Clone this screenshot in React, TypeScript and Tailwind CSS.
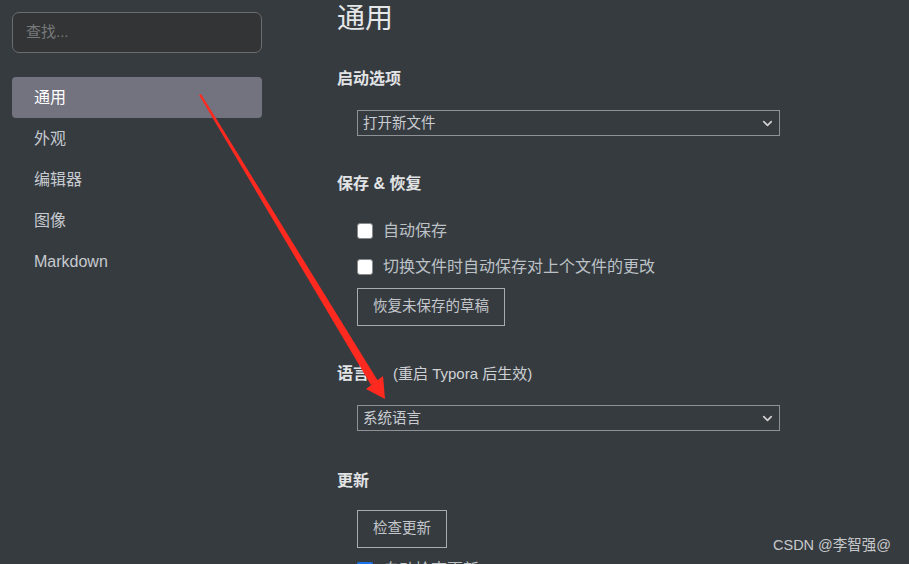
import { ChevronDown, Check } from 'lucide-react';

const font = { fontFamily: '"Liberation Sans", "Noto Sans CJK SC", sans-serif' };

const navItems = ['通用', '外观', '编辑器', '图像', 'Markdown'];

const Select = ({ value }: { value: string }) => (
  <div className="ml-5 flex h-[26px] w-[423px] items-center justify-between border border-[#8e9297] pl-[5px] pr-[4px] text-[14.5px] text-[#c9ccd0]">
    <span className="leading-none">{value}</span>
    <ChevronDown className="h-[15px] w-[15px] text-[#d0d0d0]" strokeWidth={2.75} />
  </div>
);

const Checkbox = ({ label, checked = false }: { label: string; checked?: boolean }) => (
  <label className="ml-5 flex h-6 items-center gap-[10px] text-[16px] text-[#bcc1c6]">
    <span
      className={
        checked
          ? 'flex h-[16px] w-[16px] items-center justify-center rounded-[2px] bg-[#1a73e8]'
          : 'h-[16px] w-[16px] rounded-[3px] border border-[#8a8a8a] bg-white'
      }
    >
      {checked && <Check className="h-3 w-3 text-white" strokeWidth={4} />}
    </span>
    {label}
  </label>
);

const Button = ({ children }: { children: string }) => (
  <button className="ml-5 h-[38px] w-fit border border-[#a9abad] px-[15px] text-[14.5px] text-[#c3c6ca]">
    {children}
  </button>
);

const Heading = ({ children }: { children: React.ReactNode }) => (
  <h3 className="h-6 text-[16px] font-bold leading-6 text-[#e1e3e5]">{children}</h3>
);

export default function App() {
  return (
    <div className="relative flex h-[564px] w-[909px] overflow-hidden bg-[#363b40]" style={font}>
      <aside className="flex w-[274px] shrink-0 flex-col p-3">
        <div className="flex h-[41px] items-center rounded-[7px] border border-[#6b6c6e] bg-[#333435] px-[13px] text-[15px] text-[#77797b]">
          查找...
        </div>
        <nav className="mt-6 flex flex-col">
          {navItems.map((name, i) => (
            <div
              key={name}
              className={
                i === 0
                  ? 'flex h-[41px] items-center rounded-[4px] bg-[#737380] px-[22px] text-[16px] text-white'
                  : 'flex h-[41px] items-center px-[22px] text-[16px] text-[#c6cacf]'
              }
            >
              {name}
            </div>
          ))}
        </nav>
      </aside>

      <main className="flex flex-1 flex-col pl-[63px]">
        <h1 className="h-9 text-[28px] leading-[38px] text-[#e4e6e8]">通用</h1>

        <div className="mt-[31px]">
          <Heading>启动选项</Heading>
        </div>
        <div className="mt-[19px]">
          <Select value="打开新文件" />
        </div>

        <div className="mt-[36px]">
          <Heading>保存 &amp; 恢复</Heading>
        </div>
        <div className="mt-[23px] flex flex-col gap-3">
          <Checkbox label="自动保存" />
          <Checkbox label="切换文件时自动保存对上个文件的更改" />
        </div>
        <div className="mt-[9px]">
          <Button>恢复未保存的草稿</Button>
        </div>

        <div className="mt-[36px] flex items-center">
          <Heading>语言</Heading>
          <span className="ml-6 text-[15px] text-[#cfd2d5]">(重启 Typora 后生效)</span>
        </div>
        <div className="mt-[19px]">
          <Select value="系统语言" />
        </div>

        <div className="mt-[38px]">
          <Heading>更新</Heading>
        </div>
        <div className="mt-[17px]">
          <Button>检查更新</Button>
        </div>
        <div className="mt-[10px]">
          <Checkbox label="自动检查更新" checked />
        </div>
      </main>

      <span className="absolute left-[773px] top-[535px] text-[14.5px] text-[#c6c8ca]">CSDN @李智强@</span>

      <svg className="pointer-events-none absolute left-0 top-0" width="909" height="564">
        <polygon points="199,95 201,94 378,381 371,385" fill="#ff2a1f" />
        <polygon points="385,399 366,389 383,376" fill="#ff2a1f" />
      </svg>
    </div>
  );
}
